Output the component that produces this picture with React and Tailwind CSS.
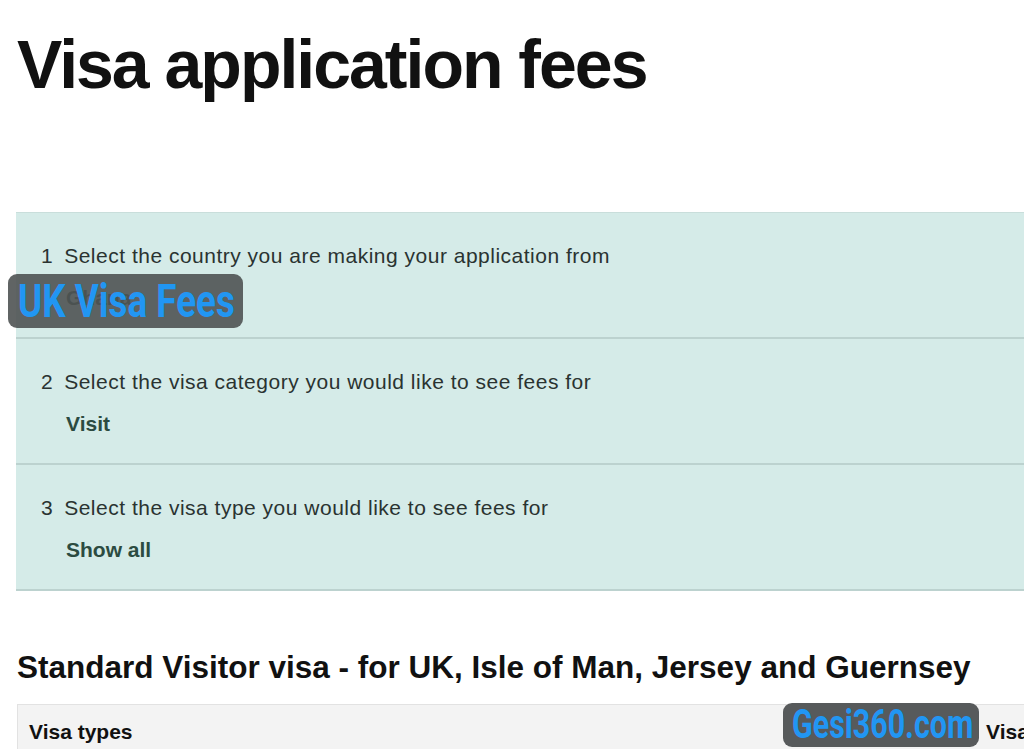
export default function App() {
  const rows = [
    { n: '1', label: 'Select the country you are making your application from', value: 'Ghana' },
    { n: '2', label: 'Select the visa category you would like to see fees for', value: 'Visit' },
    { n: '3', label: 'Select the visa type you would like to see fees for', value: 'Show all' },
  ]

  return (
    <div className="relative w-full h-[749px] overflow-hidden bg-white text-[#0b0c0c]"
      style={{ fontFamily: "'Liberation Sans', Arial, sans-serif" }}>
      {/* Title */}
      <h1 className="ml-[17px] pt-[30px] text-[68px] leading-[68px] font-bold tracking-[-2px] text-[#111]">
        Visa application fees
      </h1>

      {/* Steps panel */}
      <div className="mt-[114px] ml-[16px] bg-[#d5ebe8] border-t border-[#c9dedb]">
        {rows.map((r) => (
          <div key={r.n} className="h-[126px] border-b-2 border-[#bcd2cf] pt-[31px] pl-[25px]">
            <p className="flex text-[21px] leading-[24px] tracking-[0.5px] text-[#2a3331]">
              <span>{r.n}</span>
              <span className="ml-[11px]">{r.label}</span>
            </p>
            <p className="mt-[18px] pl-[25px] text-[21px] leading-[24px] font-bold text-[#2c4b41]">
              {r.value}
            </p>
          </div>
        ))}
      </div>

      {/* Section heading */}
      <h2 className="mt-[58px] ml-[17px] text-[31.5px] leading-[36px] font-bold text-[#111] whitespace-nowrap">
        Standard Visitor visa - for UK, Isle of Man, Jersey and Guernsey
      </h2>

      {/* Table header */}
      <div className="mt-[19px] ml-[17px] grid grid-cols-[958px_1fr] bg-[#f3f3f3] border-t border-l border-[#e2e2e2] h-[60px]">
        <div className="pl-[11px] pt-[15px] text-[21px] leading-[24px] font-bold text-[#111]">Visa types</div>
        <div className="pl-[10px] pt-[15px] text-[21px] leading-[24px] font-bold text-[#111] whitespace-nowrap">Visa fees</div>
      </div>

      {/* Watermark badges */}
      <div className="absolute left-[8px] top-[274px] w-[235px] h-[54px] rounded-[9px] bg-[#4f5353]/90 overflow-hidden">
        <span className="absolute left-[10px] top-[3px] origin-left scale-x-[0.8] whitespace-nowrap text-[46px] leading-[48px] font-bold text-[#2196f3]"
          style={{ fontFamily: 'Roboto, sans-serif' }}>
          UK Visa Fees
        </span>
      </div>
      <div className="absolute left-[783px] top-[703px] w-[196px] h-[44px] rounded-[9px] bg-[#575a5b] overflow-hidden">
        <span className="absolute left-[9px] top-[1px] origin-left scale-x-[0.76] whitespace-nowrap text-[40px] leading-[42px] font-bold text-[#2196f3]"
          style={{ fontFamily: 'Roboto, sans-serif' }}>
          Gesi360.com
        </span>
      </div>
    </div>
  )
}
